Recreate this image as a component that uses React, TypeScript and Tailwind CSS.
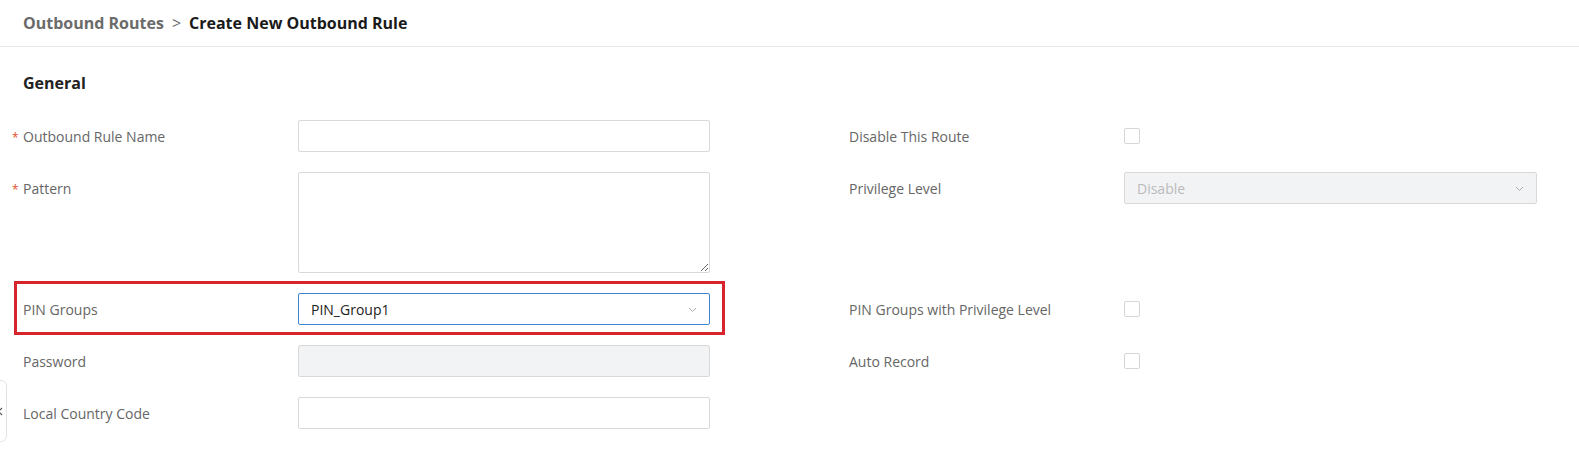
import React from 'react';

const font = { fontFamily: '"Open Sans", "Noto Sans", sans-serif' };

const Label: React.FC<{ text: string; required?: boolean }> = ({ text, required }) => (
  <div className="relative w-[275px] shrink-0 h-8 flex items-center text-[14px] text-[#666]">
    {required && <span className="absolute left-[-11px] top-[9px] text-[12px] text-[#e0522b]">*</span>}
    {text}
  </div>
);

const Chevron: React.FC = () => (
  <svg width="9" height="6" viewBox="0 0 9 6" className="absolute right-[12px] top-[13px]">
    <path d="M1 1l3.5 3.5L8 1" fill="none" stroke="#aaa" strokeWidth="1" />
  </svg>
);

const Checkbox: React.FC = () => (
  <div className="h-8 flex items-center">
    <div className="w-4 h-4 rounded-[2px] border border-[#d6d6d6] bg-white" />
  </div>
);

export default function App() {
  return (
    <div className="relative w-[1579px] h-[459px] bg-white overflow-hidden" style={font}>
      {/* breadcrumb */}
      <div className="h-[47px] border-b border-[#e8e8e8] px-[23px] flex items-center gap-[8px] text-[16px] font-bold">
        <span className="text-[#6b6b6b]">Outbound Routes</span>
        <span className="text-[#6b6b6b] font-normal">&gt;</span>
        <span className="text-[#1a1a1a]">Create New Outbound Rule</span>
      </div>

      <div className="px-[23px]">
        <h2 className="pt-[24px] text-[16px] font-bold text-[#222] leading-[24px]">General</h2>

        <div className="mt-[25px] flex flex-col gap-[20px]">
          {/* row 1 */}
          <div className="flex">
            <div className="w-[826px] flex">
              <Label text="Outbound Rule Name" required />
              <input className="w-[412px] h-8 border border-[#d9d9d9] rounded-[2px] outline-none px-3 text-[14px]" />
            </div>
            <div className="flex">
              <Label text="Disable This Route" />
              <Checkbox />
            </div>
          </div>

          {/* row 2 */}
          <div className="flex">
            <div className="w-[826px] flex">
              <Label text="Pattern" required />
              <textarea className="w-[412px] h-[101px] border border-[#d9d9d9] rounded-[2px] outline-none px-3 py-1 text-[14px]" />
            </div>
            <div className="flex">
              <Label text="Privilege Level" />
              <div className="relative w-[413px] h-8 border border-[#d9d9d9] rounded-[2px] bg-[#f2f3f5] flex items-center px-3 text-[14px] text-[#bbb]">
                Disable
                <Chevron />
              </div>
            </div>
          </div>

          {/* row 3 - highlighted */}
          <div className="flex">
            <div className="relative w-[826px] flex">
              <div className="absolute left-[-9px] top-[-12px] w-[711px] h-[54px] border-[3px] border-[#d7252d] pointer-events-none" />
              <Label text="PIN Groups" />
              <div className="relative w-[412px] h-8 border border-[#3d86d6] rounded-[2px] bg-white flex items-center px-3 text-[14px] text-[#222]">
                PIN_Group1
                <Chevron />
              </div>
            </div>
            <div className="flex">
              <Label text="PIN Groups with Privilege Level" />
              <Checkbox />
            </div>
          </div>

          {/* row 4 */}
          <div className="flex">
            <div className="w-[826px] flex">
              <Label text="Password" />
              <div className="w-[412px] h-8 border border-[#d9d9d9] rounded-[2px] bg-[#f2f3f5]" />
            </div>
            <div className="flex">
              <Label text="Auto Record" />
              <Checkbox />
            </div>
          </div>

          {/* row 5 */}
          <div className="flex">
            <div className="w-[826px] flex">
              <Label text="Local Country Code" />
              <input className="w-[412px] h-8 border border-[#d9d9d9] rounded-[2px] outline-none px-3 text-[14px]" />
            </div>
          </div>
        </div>
      </div>

      {/* collapsed side tab */}
      <div className="absolute left-[-12px] top-[380px] w-[19px] h-[62px] border border-[#e3e3e3] rounded-[6px] bg-white flex items-center justify-start pl-[8px]">
        <svg width="6" height="9" viewBox="0 0 6 9">
          <path d="M5 1L1.5 4.5 5 8" fill="none" stroke="#555" strokeWidth="1.2" />
        </svg>
      </div>
    </div>
  );
}
